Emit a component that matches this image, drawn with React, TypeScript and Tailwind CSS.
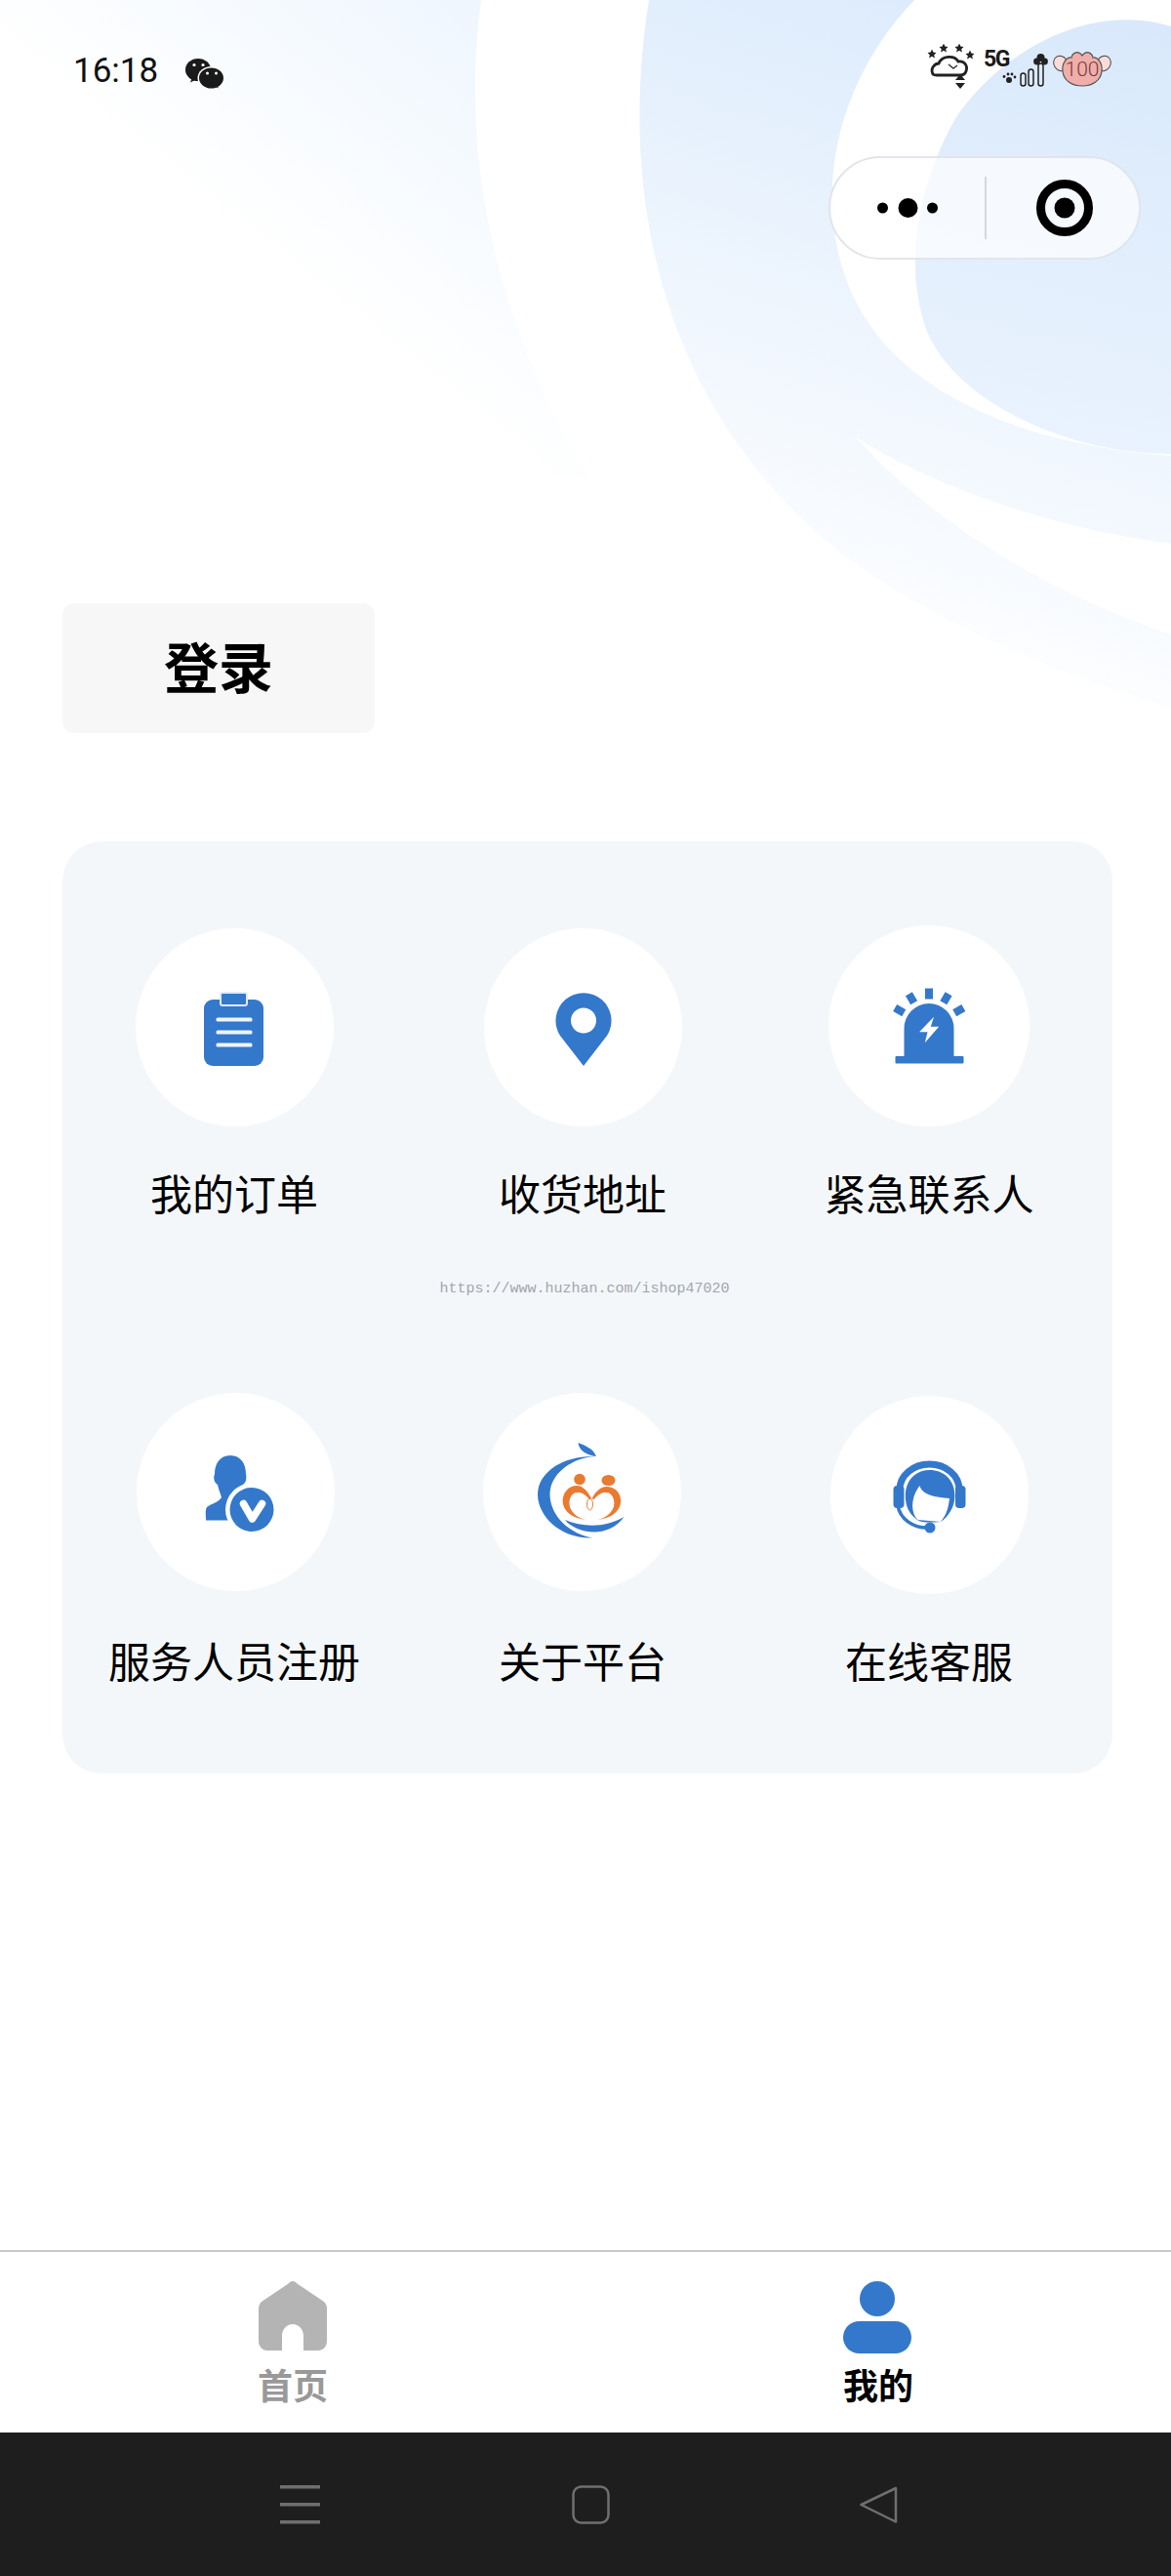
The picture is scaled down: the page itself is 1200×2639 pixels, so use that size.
import React from 'react';

const BLUE = '#3478cb';

const PageBackground = () => (
  <svg className="absolute left-0 top-0" width="1200" height="760" viewBox="0 0 1200 760">
    <defs>
      <linearGradient id="fadeA" gradientUnits="userSpaceOnUse" x1="560" y1="0" x2="320" y2="300">
        <stop offset="0" stopColor="#ecf5fe" />
        <stop offset="1" stopColor="#ffffff" />
      </linearGradient>
      <linearGradient id="fadeB" gradientUnits="userSpaceOnUse" x1="1000" y1="0" x2="780" y2="660">
        <stop offset="0" stopColor="#dcebfc" />
        <stop offset="1" stopColor="#ffffff" />
      </linearGradient>
      <linearGradient id="fadeC" gradientUnits="userSpaceOnUse" x1="1150" y1="20" x2="1050" y2="460">
        <stop offset="0" stopColor="#d9e9fb" />
        <stop offset="1" stopColor="#eaf3fe" />
      </linearGradient>
    </defs>
    <path d="M0 0H493C476 120 488 300 604 490L0 490Z" fill="url(#fadeA)" />
    <path d="M665 0C630 220 690 430 860 565C950 635 1080 690 1200 725V0Z" fill="url(#fadeB)" />
    <path d="M937 0C860 80 835 190 865 280C900 390 1030 455 1200 467V0Z" fill="#ffffff" />
    <path d="M1200 27C1110 0 1020 60 980 120C940 190 925 270 950 340C980 410 1090 465 1200 465Z" fill="url(#fadeC)" />
    <path d="M876 447C950 495 1070 540 1200 557V650C1080 610 960 540 876 447Z" fill="#ffffff" />
  </svg>
);

const WeChatIcon = () => (
  <svg width="40" height="34" viewBox="0 0 40 34">
    <ellipse cx="14" cy="14.5" rx="13" ry="11.5" fill="#1a1a1a" />
    <path d="M8 22L6 27.5L13 24Z" fill="#1a1a1a" />
    <ellipse cx="27.5" cy="23" rx="14" ry="12" fill="#fdfeff" />
    <ellipse cx="27.5" cy="23" rx="12.5" ry="10.5" fill="#1a1a1a" />
    <path d="M31 31L34.5 33.5L34 28Z" fill="#1a1a1a" />
    <circle cx="10" cy="9.5" r="1.6" fill="#fff" />
    <circle cx="19" cy="9.5" r="1.6" fill="#fff" />
    <circle cx="23.5" cy="18" r="1.5" fill="#fff" />
    <circle cx="32.5" cy="18" r="1.5" fill="#fff" />
  </svg>
);

const Star = ({ x, y }: { x: number; y: number }) => (
  <path d={`M${x} ${y - 4.5}L${x + 1.4} ${y - 1.4}L${x + 4.5} ${y - 1}L${x + 2.2} ${y + 1.2}L${x + 2.9} ${y + 4.5}L${x} ${y + 2.8}L${x - 2.9} ${y + 4.5}L${x - 2.2} ${y + 1.2}L${x - 4.5} ${y - 1}L${x - 1.4} ${y - 1.4}Z`} fill="#222" />
);

const StatusIcons = () => (
  <svg width="190" height="52" viewBox="0 0 190 52">
    {/* weather */}
    <Star x={5} y={10} />
    <Star x={17} y={4} />
    <Star x={33} y={4} />
    <Star x={44} y={11} />
    <path d="M6 31C3 25 8 20 12 20C15 12 28 11 32 18C38 17 42 22 40 28C39 31 37 32 34 32H10C8 32 7 32 6 31Z" fill="none" stroke="#222" strokeWidth="2.8" />
    <path d="M22 21L27 25L31 22" fill="none" stroke="#333" strokeWidth="1.4" />
    <path d="M29 37L39 37L34 31Z" fill="#222" />
    <path d="M29 40H39L34 46Z" fill="#222" />
    {/* 5G */}
    <text x="58" y="23" fontFamily="Roboto, sans-serif" fontWeight="700" fontSize="23" letterSpacing="-1.5" fill="#1a1a1a">5G</text>
    {/* signal */}
    <circle cx="84" cy="37" r="3" fill="#222" />
    <circle cx="79" cy="33.5" r="1.4" fill="#222" />
    <circle cx="83" cy="31" r="1.4" fill="#222" />
    <circle cx="87" cy="31" r="1.4" fill="#222" />
    <circle cx="90" cy="34" r="1.4" fill="#222" />
    <rect x="96" y="30" width="5" height="13" rx="2.5" fill="none" stroke="#222" strokeWidth="1.5" />
    <rect x="104" y="26" width="5" height="17" rx="2.5" fill="none" stroke="#222" strokeWidth="1.5" />
    <rect x="114" y="20" width="5" height="23" rx="2.5" fill="none" stroke="#222" strokeWidth="1.5" />
    <circle cx="116.5" cy="14" r="4" fill="#222" />
    <circle cx="112.5" cy="18" r="3.4" fill="#222" />
    <circle cx="120.5" cy="18" r="3.4" fill="#222" />
    {/* pig battery */}
    <ellipse cx="137" cy="20" rx="7" ry="8" fill="#f9dcda" stroke="#444" strokeWidth="1" transform="rotate(-35 137 20)" />
    <ellipse cx="181" cy="20" rx="7" ry="8" fill="#f9dcda" stroke="#444" strokeWidth="1" transform="rotate(35 181 20)" />
    <path d="M139 28C138 20 143 13 148 14C149 9 155 6 159 12C163 6 169 9 170 14C175 13 180 20 179 28C178 38 169 43 159 43C149 43 140 38 139 28Z" fill="#efaeaa" stroke="#555" strokeWidth="1.2" />
    <text x="159" y="33" textAnchor="middle" fontFamily="Roboto, sans-serif" fontWeight="300" fontSize="21" fill="#7a3a3a">100</text>
  </svg>
);

const MenuDots = () => (
  <svg width="64" height="24" viewBox="0 0 64 24">
    <circle cx="6.5" cy="12" r="5.5" fill="#000" />
    <circle cx="32.5" cy="12" r="10" fill="#000" />
    <circle cx="57.5" cy="12" r="5.5" fill="#000" />
  </svg>
);

const CapsuleTarget = () => (
  <svg width="60" height="60" viewBox="0 0 60 60">
    <circle cx="30" cy="30" r="24.5" fill="none" stroke="#000" strokeWidth="9" />
    <circle cx="30" cy="30" r="10.5" fill="#000" />
  </svg>
);

const IconBox = ({ children }: { children: React.ReactNode }) => (
  <svg width="120" height="120" viewBox="0 0 120 120">{children}</svg>
);

const OrderIcon = () => (
  <IconBox>
    <rect x="29" y="31" width="61" height="68" rx="9" fill={BLUE} />
    <rect x="46" y="24" width="27" height="13" rx="2" fill={BLUE} stroke="#dfeafa" strokeWidth="2" />
    <rect x="41.5" y="49.5" width="37" height="4" rx="1.5" fill="#eef5fd" />
    <rect x="41.5" y="62.5" width="37" height="4" rx="1.5" fill="#eef5fd" />
    <rect x="41.5" y="75.5" width="37" height="4" rx="1.5" fill="#eef5fd" />
  </IconBox>
);

const PinIcon = () => (
  <IconBox>
    <path
      fillRule="evenodd"
      d="M61 99L37 68A28.5 28.5 0 1 1 85 68ZM61 39.500A13 13 0 1 0 61 65.500A13 13 0 1 0 61 39.500Z"
      fill={BLUE}
    />
  </IconBox>
);

const AlarmIcon = () => (
  <IconBox>
    <rect x="25.5" y="91" width="70" height="7.5" rx="1" fill={BLUE} />
    <path d="M34.5 91V62.5A25.5 25.5 0 0 1 85.5 62.5V91Z" fill={BLUE} />
    <path d="M65 50.7L50 66.3H58.5L55.8 77.3L70.2 60.7H61.8Z" fill="#fff" />
    <rect x="56" y="21.5" width="8" height="11" fill={BLUE} />
    <rect x="38" y="26.5" width="8" height="10.5" fill={BLUE} transform="rotate(-30 42 31.7)" />
    <rect x="73.5" y="26.5" width="8" height="10.5" fill={BLUE} transform="rotate(30 77.5 31.7)" />
    <rect x="25.5" y="39" width="8" height="10.5" fill={BLUE} transform="rotate(-60 29.5 44)" />
    <rect x="87" y="39" width="8" height="10.5" fill={BLUE} transform="rotate(60 91 44)" />
  </IconBox>
);

const StaffIcon = () => (
  <IconBox>
    <path
      d="M54 22C43 22 38 31 38 41C36 46 38 50 41 52C42 57 44 61 45 65C41 71 35 71 30 75C28 78 29 84 29 88.5H74L72 60C68 58 66 56 67 52C70 50 71 46 70 41C70 31 65 22 54 22Z"
      fill={BLUE}
    />
    <circle cx="76" cy="77.5" r="27" fill="#fff" />
    <circle cx="76" cy="77.5" r="22.5" fill={BLUE} />
    <path d="M67.5 71.5L76.5 87L86.5 71.5" fill="none" stroke="#fff" strokeWidth="7.5" strokeLinecap="round" strokeLinejoin="round" />
  </IconBox>
);

const PlatformLogo = () => (
  <IconBox>
    <path d="M73.5 23C40 22 15 40 15 62C15 85 40 108 71 106.5C48 102 28 85 27.5 62C27.5 42 48 25 73.5 23Z" fill={BLUE} />
    <path d="M56.5 9C57 17 66 22 75 23C72 15 64 12 56.5 9Z" fill={BLUE} />
    <path d="M43 88C52 100 85 110 103.5 85C85 96 62 96 43 88Z" fill={BLUE} />
    <circle cx="58" cy="46.5" r="5.8" fill="#ea7a30" />
    <ellipse cx="87.5" cy="47.5" rx="7" ry="5.5" fill="#ea7a30" />
    <path d="M64 88C50 86 43 80 41 72C39 62 46 53 55 53C62 53 67 60 70 66L68.5 67.5C64 62 60 59.5 55 60C50 60.5 47 66 47.5 72C48 80 56 86 64 88Z" fill="#ea7a30" />
    <path d="M76.8 88C90.8 86 97.8 80 99.8 72C101.8 62 94.8 54 85.8 54C78.800 54 73.800 60 70.800 66L72.300 67.500C76.800 62 80.800 59.500 85.800 60C90.800 60.500 93.800 66 93.300 72C92.800 80 84.800 86 76.800 88Z" fill="#ea7a30" />
    <ellipse cx="68.5" cy="72" rx="3" ry="6" fill="none" stroke="#ea7a30" strokeWidth="1" />
  </IconBox>
);

const ServiceIcon = () => (
  <IconBox>
    <path d="M30 54A30.500 26 0 0 1 91 54" fill="none" stroke={BLUE} strokeWidth="7" />
    <rect x="23.5" y="50" width="11" height="23" rx="4" fill={BLUE} />
    <rect x="87" y="50" width="10.5" height="23" rx="4" fill={BLUE} />
    <path d="M36 56C38 42 48 34 61 34C75 34 85 44 86 56C88 68 82 80 72 87C60 88 52 88 48 85C38 78 35 68 36 56Z" fill={BLUE} />
    <path d="M50.5 50C52 58 64 62 81 63C80 72 78 80 72 87L48.5 85C41 78 41 62 50.5 50Z" fill="#fff" />
    <path d="M28 70C30 84 44 94 60 93" fill="none" stroke={BLUE} strokeWidth="3.5" />
    <circle cx="61" cy="93" r="5.5" fill={BLUE} />
  </IconBox>
);

const services = [
  { label: '我的订单', icon: <OrderIcon />, circle: 'w-[203px] h-[203px] self-end' },
  { label: '收货地址', icon: <PinIcon />, circle: 'w-[203px] h-[203px] self-end' },
  { label: '紧急联系人', icon: <AlarmIcon />, circle: 'w-[206px] h-[206px] self-end' },
  { label: '服务人员注册', icon: <StaffIcon />, circle: 'w-[203px] h-[203px] self-start ml-[3px]' },
  { label: '关于平台', icon: <PlatformLogo />, circle: 'w-[203px] h-[203px] self-start mr-[2px]' },
  { label: '在线客服', icon: <ServiceIcon />, circle: 'w-[203px] h-[203px] self-end' },
];

export default function App() {
  return (
    <div className="relative w-[1200px] h-[2639px] flex flex-col bg-white overflow-hidden font-['Noto_Sans_CJK_SC','Noto_Sans',sans-serif]">
      <PageBackground />

      {/* Status bar */}
      <div className="relative flex items-start justify-between h-[160px] pl-[75px] pr-[60px]">
        <div className="flex items-center gap-[27px] pt-[51px]">
          <span className="text-[35px] leading-[44px] font-['Roboto'] font-normal text-[#111]">16:18</span>
          <span className="pt-[2px]"><WeChatIcon /></span>
        </div>
        <div className="pt-[45px]"><StatusIcons /></div>
      </div>

      {/* Capsule */}
      <div className="relative flex justify-end pr-[31px]">
        <div className="flex items-center w-[320px] h-[106px] rounded-full border-2 border-[#e2e5ea] bg-white/70">
          <div className="flex justify-center w-[158px]"><MenuDots /></div>
          <div className="w-[2px] h-[64px] bg-[#d5d8dc]" />
          <div className="flex justify-center flex-1 pl-[4px]"><CapsuleTarget /></div>
        </div>
      </div>

      {/* Login */}
      <div className="relative mt-[352px] ml-[64px] flex items-center justify-center w-[320px] h-[133px] pb-[7px] rounded-[12px] bg-[#f7f7f7]">
        <span className="text-[56px] leading-[70px] font-bold text-black">登录</span>
      </div>

      {/* Service grid */}
      <div className="relative mt-[111px] ml-[64px] mr-[60px] pt-[86px] pb-[89px] rounded-[40px] bg-[#f4f7fa]">
        <div className="grid grid-cols-[352px_362px_348px] gap-y-[178px]">
          {services.map((item) => (
            <div key={item.label} className="flex flex-col items-center">
              <div className="flex justify-center h-[206px]">
                <div className={`flex items-center justify-center rounded-full bg-white ${item.circle}`}>
                  {item.icon}
                </div>
              </div>
              <div className="mt-[39px] h-[56px] text-[43px] leading-[56px] text-black whitespace-nowrap">
                {item.label}
              </div>
            </div>
          ))}
        </div>
        <div className="absolute left-0 right-0 top-[449px] pr-[6px] text-center text-[15px] leading-[20px] font-['Liberation_Mono'] text-[#a2a6ab]">
          https://www.huzhan.com/ishop47020
        </div>
      </div>

      <div className="flex-1" />

      {/* Tab bar */}
      <div className="relative grid grid-cols-2 h-[187px] pt-[30px] border-t-2 border-[#c9c9c9] bg-white">
        <div className="flex flex-col items-center">
          <svg width="70" height="72" viewBox="0 0 70 72">
            <path
              fillRule="evenodd"
              d="M35 0C33 0 31.500 1 30.500 2.500L3 21C1 23 0 25 0 28V61C0 67 4 71 9 71H24V56C24 49 29 44 35 44C41 44 46 49 46 56V71H61C66 71 70 67 70 61V28C70 25 69 23 67 21L39.500 2.500C38.500 1 37 0 35 0Z"
              fill="#b4b4b4"
            />
          </svg>
          <span className="mt-[11px] text-[36px] leading-[44px] font-bold text-[#999]">首页</span>
        </div>
        <div className="flex flex-col items-center">
          <svg className="mr-[3px]" width="70" height="74" viewBox="0 0 70 74">
            <circle cx="35" cy="18" r="18" fill={BLUE} />
            <rect x="0" y="41" width="70" height="33" rx="16.500" fill={BLUE} />
          </svg>
          <span className="mt-[9px] text-[36px] leading-[44px] font-bold text-black">我的</span>
        </div>
      </div>

      {/* Android nav bar */}
      <div className="relative flex items-start h-[147px] pt-[54px] pl-[287px] bg-[#1e1e1e]">
        <svg width="41" height="40" viewBox="0 0 41 40">
          <rect y="0" width="41" height="3.500" fill="#6f6f6f" />
          <rect y="18" width="41" height="3.500" fill="#6f6f6f" />
          <rect y="36" width="41" height="3.500" fill="#6f6f6f" />
        </svg>
        <svg className="ml-[258px]" width="40" height="40" viewBox="0 0 40 40">
          <rect x="1.500" y="1.500" width="36" height="37" rx="8" fill="none" stroke="#6f6f6f" strokeWidth="2.500" />
        </svg>
        <svg className="ml-[255px]" width="40" height="40" viewBox="0 0 40 40">
          <path d="M37 3L1.500 20L37 37.500Z" fill="none" stroke="#6f6f6f" strokeWidth="2.500" strokeLinejoin="round" />
        </svg>
      </div>
    </div>
  );
}
